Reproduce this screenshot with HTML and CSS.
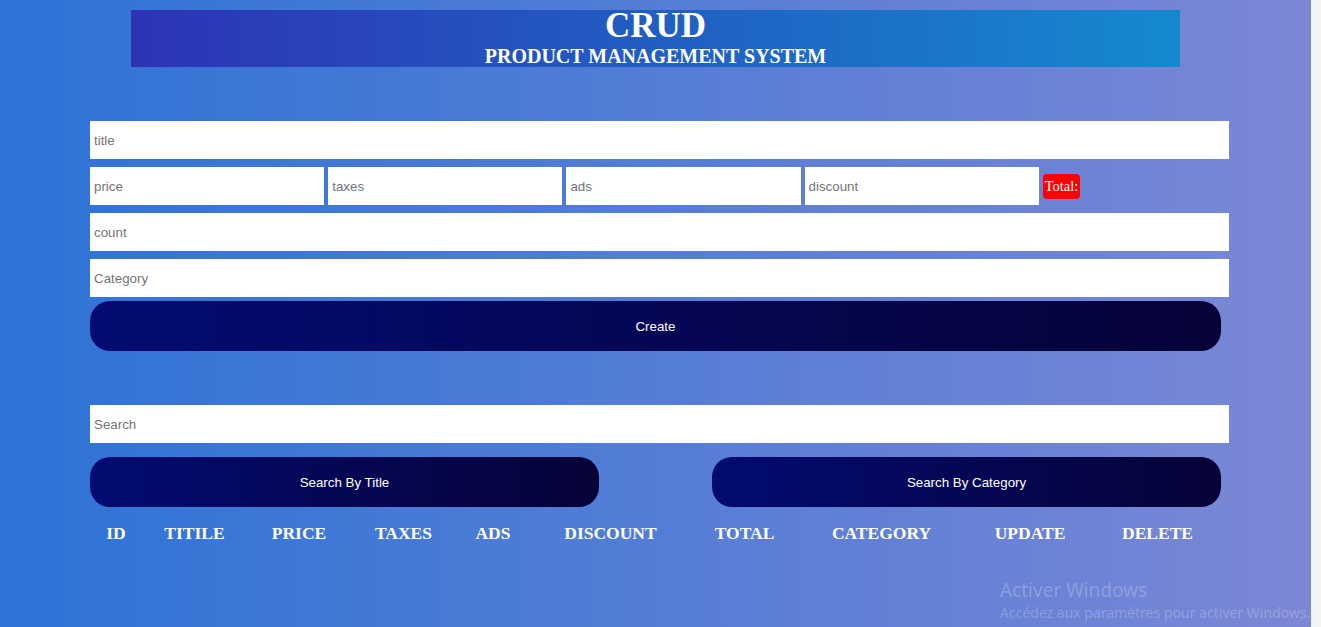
FILE: index.html
```html
<!DOCTYPE html>
<html lang="en">
<head>
<meta charset="utf-8">
<title>CRUD</title>
<link rel="stylesheet" href="styles.css">
</head>
<body>
<div class="page">
  <header class="head">
    <h1 class="head-title">CRUD</h1>
    <h2 class="head-sub">PRODUCT MANAGEMENT SYSTEM</h2>
  </header>
  <main class="crud">
    <section class="inputs">
      <input class="field" type="text" placeholder="title">
      <div class="price-row">
        <input class="field field-small" type="number" placeholder="price">
        <input class="field field-small" type="number" placeholder="taxes">
        <input class="field field-small" type="number" placeholder="ads">
        <input class="field field-small" type="number" placeholder="discount">
        <small class="total">Total:</small>
      </div>
      <input class="field" type="number" placeholder="count">
      <input class="field" type="text" placeholder="Category">
      <button class="btn btn-create" type="button">Create</button>
    </section>
    <section class="search-block">
      <input class="field" type="text" placeholder="Search">
      <div class="search-btns">
        <button class="btn btn-half" type="button">Search By Title</button>
        <button class="btn btn-half" type="button">Search By Category</button>
      </div>
    </section>
    <table class="products">
      <thead>
        <tr>
          <th class="col-id">ID</th>
          <th class="col-title">TITILE</th>
          <th class="col-price">PRICE</th>
          <th class="col-taxes">TAXES</th>
          <th class="col-ads">ADS</th>
          <th class="col-discount">DISCOUNT</th>
          <th class="col-total">TOTAL</th>
          <th class="col-category">CATEGORY</th>
          <th class="col-update">UPDATE</th>
          <th class="col-delete">DELETE</th>
        </tr>
      </thead>
      <tbody></tbody>
    </table>
  </main>
</div>
<div class="watermark">
  <div class="wm-title">Activer Windows</div>
  <div class="wm-sub">Accédez aux paramètres pour activer Windows.</div>
</div>
</body>
</html>
```

FILE: styles.css
```css
html {
  background: #f3f3f3;
  height: 100%;
}
body {
  margin: 0;
  width: 1311px;
  height: 100%;
  background: linear-gradient(to right, #2c73d6, #7c87d5);
  font-family: "Liberation Serif", serif;
  overflow: hidden;
}
.page {
  padding-top: 10px;
}
.head {
  width: 80%;
  height: 57px;
  margin: 0 auto;
  background: linear-gradient(to right, #2d33b4, #1589d0);
  color: #fff;
  text-align: center;
}
.head-title {
  margin: 0;
  font-size: 35px;
  line-height: 32px;
  font-weight: bold;
}
.head-sub {
  margin: 3px 0 0;
  font-size: 20px;
  line-height: 22px;
  font-weight: bold;
}
.crud {
  margin: 0 90px;
  padding-top: 50px;
}
.inputs,
.search-block {
  display: flex;
  flex-direction: column;
}
.field {
  display: block;
  width: 100%;
  height: 30px;
  padding: 4px;
  margin: 4px 0;
  border: none;
  outline: none;
  background: #fff;
  box-sizing: content-box;
  font-family: "Liberation Sans", Arial, sans-serif;
  font-size: 13.33px;
  color: #222;
}
.field::placeholder {
  color: #757575;
}
.field::-webkit-outer-spin-button,
.field::-webkit-inner-spin-button {
  -webkit-appearance: none;
  margin: 0;
}
.price-row {
  display: flex;
  align-items: center;
  gap: 4px;
}
.field-small {
  width: 20%;
  flex: none;
}
.total {
  background: #f00;
  color: #fff;
  font-family: "Liberation Serif", serif;
  font-size: 14.5px;
  line-height: 17px;
  padding: 4px 2px;
  border-radius: 4px;
}
.btn {
  height: 50px;
  border: none;
  border-radius: 20px;
  background: linear-gradient(to right, #020b71, #060237);
  color: #fff;
  font-family: "Liberation Sans", Arial, sans-serif;
  font-size: 13.33px;
  cursor: pointer;
}
.btn-create {
  width: 100%;
  margin: 0;
}
.search-block {
  margin-top: 50px;
}
.search-btns {
  display: flex;
  justify-content: space-between;
  margin-top: 10px;
}
.btn-half {
  width: 45%;
}
.products {
  width: 1130px;
  margin-top: 16px;
  color: #fff;
  table-layout: fixed;
  border-collapse: collapse;
}
.products th {
  padding: 0;
  font-family: "Liberation Serif", serif;
  font-size: 17.5px;
  line-height: 20px;
  font-weight: bold;
  white-space: nowrap;
}
.col-id { width: 52px; }
.col-title { width: 105px; }
.col-price { width: 104px; }
.col-taxes { width: 105px; }
.col-ads { width: 74px; }
.col-discount { width: 161px; }
.col-total { width: 107px; }
.col-category { width: 167px; }
.col-update { width: 130px; }
.col-delete { width: 125px; }
.watermark {
  position: fixed;
  left: 1000px;
  top: 577px;
  color: rgba(255, 255, 255, 0.22);
  font-family: "Noto Sans", "Open Sans", sans-serif;
  white-space: nowrap;
  width: 311px;
  overflow: hidden;
}
.wm-title {
  font-size: 19px;
  line-height: 27px;
}
.wm-sub {
  font-size: 14px;
  line-height: 18px;
}
```
